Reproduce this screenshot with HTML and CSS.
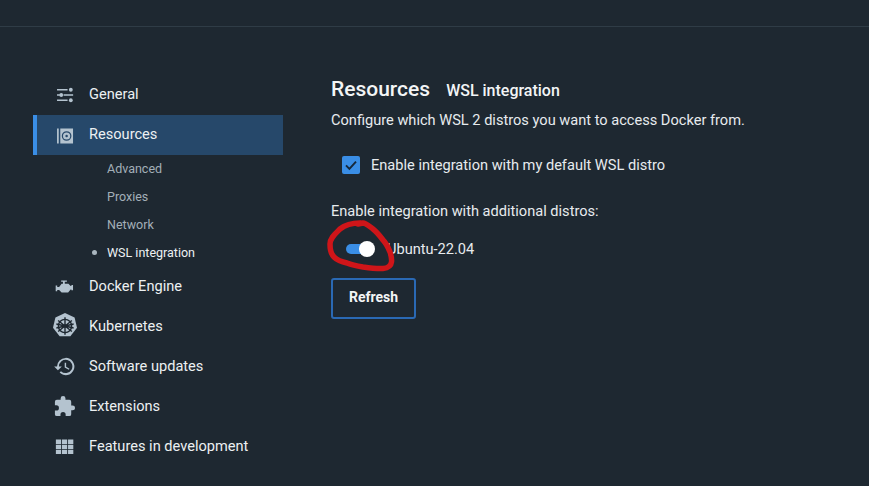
FILE: index.html
```html
<!DOCTYPE html>
<html lang="en">
<head>
<meta charset="utf-8">
<title>Resources - WSL integration</title>
<link rel="stylesheet" href="styles.css">
</head>
<body>
<div class="topbar"></div>
<div class="layout">
  <nav class="sidebar">
    <a class="nav-item">
      <svg class="icon" viewBox="0 0 24 24"><g fill="none" stroke="#b4c3cf" stroke-width="1.4"><path d="M4.2 7h11M4.2 12.500h3M11 12.500h10M4.200 18h11"/></g><g fill="#b4c3cf"><circle cx="18.6" cy="7" r="2"/><circle cx="8.6" cy="12.500" r="2"/><circle cx="18.6" cy="18" r="2"/></g></svg>
      <span>General</span>
    </a>
    <a class="nav-item active">
      <svg class="icon" viewBox="0 0 24 24"><path fill="#b4c3cf" d="M4.2 4.7h1.8v15.6H4.2zM7.6 4.7h13.3v15.6H7.6z"/><circle cx="14.2" cy="12.5" r="4.4" fill="none" stroke="#28496a" stroke-width="1.3"/><circle cx="14.2" cy="12.5" r="1.3" fill="#28496a"/></svg>
      <span>Resources</span>
    </a>
    <div class="subnav">
      <a class="sub-item">Advanced</a>
      <a class="sub-item">Proxies</a>
      <a class="sub-item">Network</a>
      <a class="sub-item current">WSL integration</a>
    </div>
    <a class="nav-item">
      <svg class="icon" viewBox="0 0 24 24"><path fill="#b4c3cf" d="M8.5 5.7h6v1.4h-2.2v1.9h3.8l2.3 2.4h.8v-.9h1.7v5.4h-1.7v-.9h-.8l-2.6 3.3H9l-2.6-2.6H4.4v1.2H2.8V11h1.6v1.4h2L9 9h1.4V7.1H8.5z"/></svg>
      <span>Docker Engine</span>
    </a>
    <a class="nav-item">
      <svg class="icon icon-lg" viewBox="0 0 24 24"><path fill="#b4c3cf" d="M12 .8l8.2 3.9 2.1 8.9-5.7 7.2H7.4L1.7 13.6l2.1-8.9z"/><g fill="none" stroke="#1e2831" stroke-width="1.2"><circle cx="12" cy="12" r="5.7"/><path d="M12 4.4v15.2M6.1 7.3l11.8 9.4M17.9 7.3L6.1 16.7M4.6 13.7l14.8-3.4M19.4 13.7L4.6 10.3"/></g><circle cx="12" cy="12" r="1.5" fill="#1e2831"/></svg>
      <span>Kubernetes</span>
    </a>
    <a class="nav-item">
      <svg class="icon" viewBox="0 0 24 24"><path fill="#b4c3cf" d="M13.2 3a9 9 0 0 0-9 9H1.2l3.9 3.9.1.1 4-4h-3a7 7 0 1 1 2.1 4.9l-1.4 1.4A9 9 0 1 0 13.2 3zm-1 5v5l4.3 2.5.7-1.2-3.5-2.1V8z"/></svg>
      <span>Software updates</span>
    </a>
    <a class="nav-item">
      <svg class="icon" viewBox="0 0 24 24"><path fill="#b4c3cf" d="M20.5 11H19V7a2 2 0 0 0-2-2h-4V3.5a2.5 2.5 0 0 0-5 0V5H4a2 2 0 0 0-2 2v3.8h1.5a2.7 2.7 0 0 1 0 5.4H2V20a2 2 0 0 0 2 2h3.8v-1.5a2.7 2.7 0 0 1 5.4 0V22H17a2 2 0 0 0 2-2v-4h1.5a2.5 2.5 0 0 0 0-5z"/></svg>
      <span>Extensions</span>
    </a>
    <a class="nav-item">
      <svg class="icon" viewBox="0 0 24 24"><path fill="#b4c3cf" d="M3 4.7h5.500v4.600H3zM9.400 4.700h5.400v4.600H9.400zM15.700 4.700h5.500v4.600h-5.500zM3 10.100h5.500v4.400H3zM9.400 10.100h5.400v4.400H9.400zM15.700 10.100h5.500v4.400h-5.500zM3 15.300h5.500v4.400H3zM9.400 15.300h5.400v4.400H9.400zM15.700 15.300h5.500v4.400h-5.500z"/></svg>
      <span>Features in development</span>
    </a>
  </nav>
  <main class="content">
    <header class="heading">
      <h1>Resources</h1>
      <h2>WSL integration</h2>
    </header>
    <p class="intro">Configure which WSL 2 distros you want to access Docker from.</p>
    <label class="check-row">
      <span class="checkbox"><svg viewBox="0 0 18 18"><path d="M4 9.400l3.400 3.400L14 5.600" fill="none" stroke="#16283a" stroke-width="1.9"/></svg></span>
      <span>Enable integration with my default WSL distro</span>
    </label>
    <p class="additional">Enable integration with additional distros:</p>
    <div class="distro-row">
      <span class="switch"><span class="knob"></span></span>
      <span class="distro-name">Ubuntu-22.04</span>
    </div>
    <button class="refresh">Refresh</button>
  </main>
</div>
<svg class="scribble" viewBox="0 0 869 486"><path d="M360 223C352 223 345 225 340 229C335 234 330 238 330 244C330 250 331 254 334 257C338 261 342 262 347 263C352 265 357 266 363 267C370 268 377 269 383 268.500C388 268 391 266 391.500 262C392 258 391 255 390 252C388 247 386 243 383 240C380 236 377 232 373 229C369 226 366 223 363 223L358 224" fill="none" stroke="#cf1519" stroke-width="5.500" stroke-linecap="round" stroke-linejoin="round"/></svg>
</body>
</html>
```
FILE: styles.css
```css
* { box-sizing: border-box; }
html, body { height: 100%; }
body {
  margin: 0;
  position: relative;
  overflow: hidden;
  background: #1e2831;
  color: #e7ebee;
  font-family: Roboto, "Liberation Sans", sans-serif;
  font-size: 14px;
}
.topbar {
  height: 27px;
  border-bottom: 1px solid #2f3c46;
}
.layout {
  display: flex;
  padding: 47px 0 0 33px;
}
.sidebar {
  width: 250px;
  flex: none;
  display: flex;
  flex-direction: column;
}
.nav-item {
  height: 40px;
  display: flex;
  align-items: center;
  gap: 13px;
  padding-left: 20px;
  font-size: 14.6px;
  color: #ecf0f2;
}
.nav-item.active {
  margin-top: 1px;
  padding-bottom: 2px;
  background: #26486a;
  border-left: 4px solid #3a8ee6;
  padding-left: 16px;
}
.icon {
  width: 23px;
  height: 23px;
  flex: none;
}
.nav-item.active .icon { margin-top: 2px; }
.icon-lg {
  width: 28px;
  height: 28px;
  margin: 0 -2.5px;
}
.subnav {
  display: flex;
  flex-direction: column;
  margin-top: -1px;
}
.sub-item {
  height: 28px;
  display: flex;
  align-items: center;
  padding-left: 74px;
  font-size: 12.5px;
  color: #a3afb8;
  position: relative;
}
.sub-item.current { color: #edf1f3; }
.sub-item.current::before {
  content: "";
  position: absolute;
  left: 59px;
  top: 12px;
  width: 5px;
  height: 5px;
  border-radius: 50%;
  background: #aab6bf;
}
.content {
  padding-left: 48px;
  display: flex;
  flex-direction: column;
  align-items: flex-start;
}
.heading {
  display: flex;
  align-items: baseline;
  gap: 16px;
  margin-top: 3px;
}
h1 {
  margin: 0;
  font-size: 21px;
  font-weight: 500;
  line-height: 24px;
  color: #f3f5f6;
}
h2 {
  margin: 0;
  font-size: 16px;
  font-weight: 500;
  line-height: 24px;
  color: #f3f5f6;
}
.intro {
  margin: 6.5px 0 0;
  font-size: 14.6px;
  line-height: 20px;
  color: #e7ebee;
}
.check-row {
  margin: 23.5px 0 0 11px;
  height: 24px;
  display: flex;
  align-items: center;
  gap: 11px;
  font-size: 14.6px;
}
.checkbox {
  width: 18px;
  height: 18px;
  border-radius: 2px;
  background: #3a8ee6;
  display: flex;
}
.checkbox svg { width: 18px; height: 18px; }
.additional {
  margin: 24px 0 0;
  font-size: 14.6px;
  line-height: 20px;
}
.distro-row {
  margin: 16px 0 0 15px;
  height: 24px;
  display: flex;
  align-items: center;
}
.switch {
  width: 28px;
  height: 10px;
  border-radius: 5px;
  background: #3a8ee6;
  position: relative;
  flex: none;
}
.knob {
  position: absolute;
  right: -1px;
  top: -3px;
  width: 16px;
  height: 16px;
  border-radius: 50%;
  background: #fff;
}
.distro-name {
  margin-left: 13px;
  font-size: 14.6px;
  color: #e7ebee;
}
.refresh {
  margin-top: 17px;
  width: 85px;
  height: 41px;
  background: transparent;
  border: 2px solid #2a69b4;
  border-radius: 3px;
  color: #f3f5f6;
  font-family: inherit;
  font-size: 14px;
  font-weight: 700;
  padding: 0 0 4px;
}
.scribble {
  position: absolute;
  left: 0;
  top: 0;
  width: 869px;
  height: 486px;
  pointer-events: none;
}
```
